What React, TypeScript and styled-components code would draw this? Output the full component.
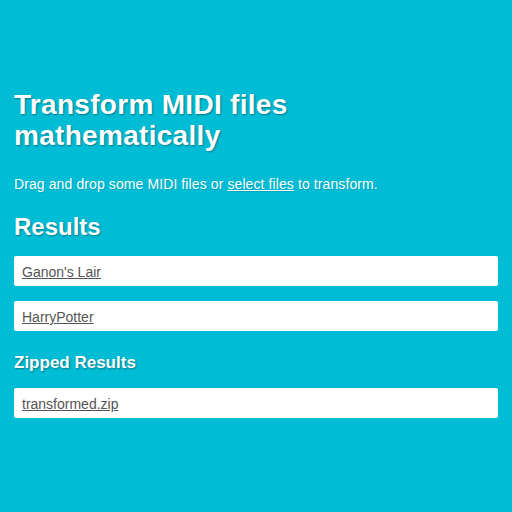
import React from "react";
import styled, { createGlobalStyle } from "styled-components";

const Global = createGlobalStyle`
  html, body { margin: 0; padding: 0; background: #00bcd4; }
  body { font-family: "Liberation Sans", Arial, sans-serif; color: #fff; }
`;

const Page = styled.main`
  padding: 89px 14px 20px;
  display: flex;
  flex-direction: column;
`;

const Title = styled.h1`
  margin: 0 0 24px;
  font-size: 28px;
  line-height: 31px;
  letter-spacing: 0.3px;
  font-weight: bold;
  text-shadow: 1px 1px 2px rgba(0, 0, 0, 0.35);
`;

const Intro = styled.p`
  margin: 0 0 20px;
  font-size: 14px;
  line-height: 18px;
  letter-spacing: 0.1px;
  text-shadow: 1px 1px 1px rgba(0, 0, 0, 0.12);
`;

const IntroLink = styled.a`
  color: #fff;
  text-decoration: underline;
`;

const Heading = styled.h2<{ $size: number; $lh: number }>`
  margin: 0 0 15px;
  font-size: ${(p) => p.$size}px;
  line-height: ${(p) => p.$lh}px;
  font-weight: bold;
  text-shadow: 1px 1px 2px rgba(0, 0, 0, 0.35);
`;

const List = styled.ul`
  list-style: none;
  margin: 0 0 22px;
  padding: 0;
  display: flex;
  flex-direction: column;
  gap: 15px;
`;

const Card = styled.li`
  background: #fff;
  border-radius: 2px;
  padding: 8px 8px 6px;
  line-height: 16px;
`;

const FileLink = styled.a`
  color: #555;
  font-size: 14px;
  text-decoration: underline;
`;

export default function App() {
  return (
    <>
      <Global />
      <Page>
        <Title>Transform MIDI files mathematically</Title>
        <Intro>
          Drag and drop some MIDI files or <IntroLink href="#">select files</IntroLink> to transform.
        </Intro>
        <Heading $size={24} $lh={28}>Results</Heading>
        <List>
          <Card><FileLink href="#">Ganon's Lair</FileLink></Card>
          <Card><FileLink href="#">HarryPotter</FileLink></Card>
        </List>
        <Heading $size={17} $lh={20} as="h3">Zipped Results</Heading>
        <List>
          <Card><FileLink href="#">transformed.zip</FileLink></Card>
        </List>
      </Page>
    </>
  );
}
